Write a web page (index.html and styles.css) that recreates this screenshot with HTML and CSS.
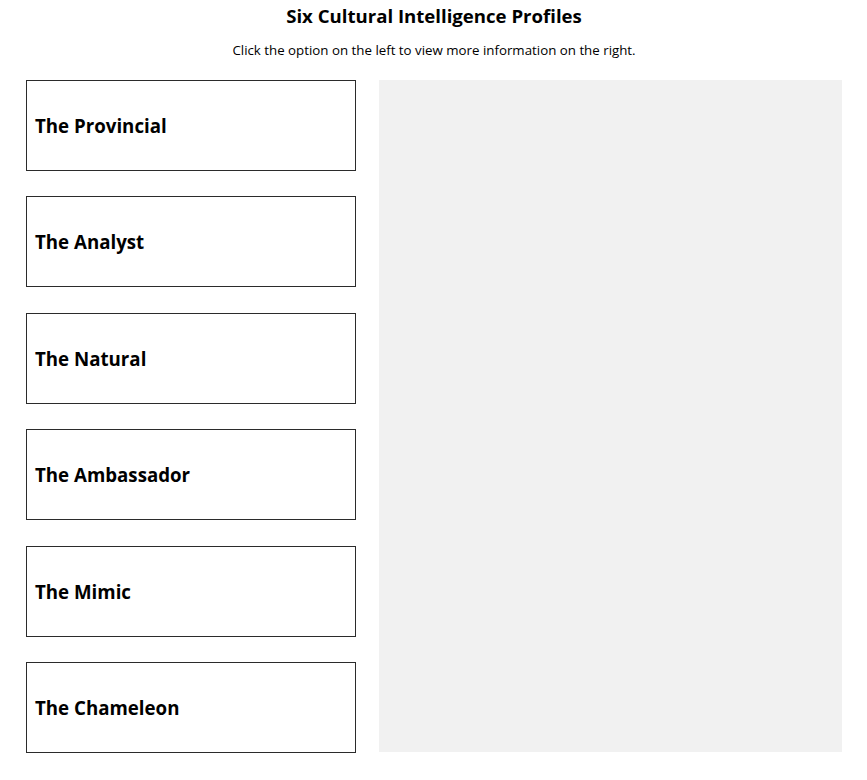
FILE: index.html
```html
<!DOCTYPE html>
<html lang="en">
<head>
    <meta charset="UTF-8">
    <meta content="width=device-width, initial-scale=1.0" name="viewport">
    <title>Six Cultural Intelligence Profiles</title>
    <link rel="stylesheet" href="styles.css">
</head>
<body>
<h1>Six Cultural Intelligence Profiles</h1>
<p class="intro">Click the option on the left to view more information on the right.</p>
<div class="layout">
    <div class="options">
        <div class="option">The Provincial</div>
        <div class="option">The Analyst</div>
        <div class="option">The Natural</div>
        <div class="option">The Ambassador</div>
        <div class="option">The Mimic</div>
        <div class="option">The Chameleon</div>
    </div>
    <div class="details"></div>
</div>
</body>
</html>
```

FILE: styles.css
```css
body {
    font-family: "Open Sans", Arial, sans-serif;
    color: #000;
    margin: 0;
    padding: 0 25px 0 26px;
    background-color: #fff;
}
h1 {
    font-size: 18.6px;
    font-weight: bold;
    text-align: center;
    margin: 3px 0 0;
    line-height: 26px;
}
.intro {
    font-size: 13.3px;
    text-align: center;
    margin: 12px 0 0;
    line-height: 18px;
}
.layout {
    display: flex;
    gap: 23px;
    margin-top: 21px;
}
.options {
    width: 330px;
    height: 673px;
    display: flex;
    flex-direction: column;
    justify-content: space-between;
}
.option {
    height: 91px;
    box-sizing: border-box;
    border: 1px solid #2b2b2b;
    display: flex;
    align-items: center;
    padding-left: 8px;
    font-size: 18.7px;
    font-weight: bold;
    cursor: pointer;
}
.details {
    flex: 1;
    height: 672px;
    background-color: #f1f1f1;
}
```
